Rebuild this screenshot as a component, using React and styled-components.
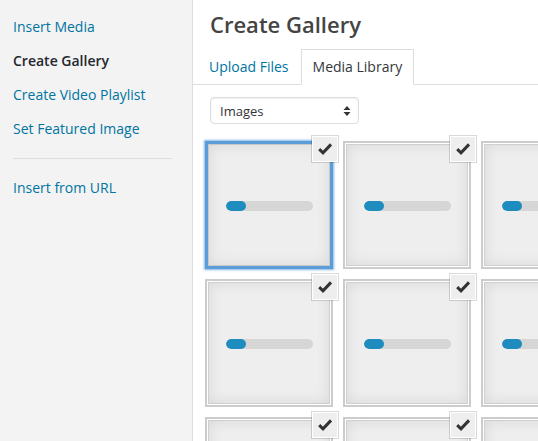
import React from 'react';
import styled, { createGlobalStyle } from 'styled-components';

const GlobalStyle = createGlobalStyle`
  * { box-sizing: border-box; }
  html, body { margin: 0; padding: 0; }
  body {
    font-family: "Open Sans", "Noto Sans", "Liberation Sans", sans-serif;
    font-size: 14px;
    background: #fff;
    overflow: hidden;
  }
`

const menu = [
  { label: 'Insert Media' },
  { label: 'Create Gallery', active: true },
  { label: 'Create Video Playlist' },
  { label: 'Set Featured Image' },
  { separator: true },
  { label: 'Insert from URL' },
];

const tiles = [
  { focused: true }, {}, {},
  {}, {}, {},
  {}, {}, {},
];

const Frame = styled.div`
  display: flex;
  width: 538px;
  height: 441px;
  overflow: hidden;
`
const Menu = styled.nav`
  flex: 0 0 193px;
  padding: 10px 0;
  background: #f3f3f3;
  border-right: 1px solid #dddddd;
`
const MenuItem = styled.a`
  display: block;
  padding: 8px 13px;
  line-height: 18px;
  font-size: 14px;
  white-space: nowrap;
  text-decoration: none;
  color: ${({ $active }) => ($active ? '#23282d' : '#0074a2')};
  font-weight: ${({ $active }) => ($active ? 600 : 400)};
`
const Separator = styled.div`
  height: 1px;
  margin: 12px 20px 12px 13px;
  background: #dddddd;
`
const Content = styled.main`
  flex: 1;
  min-width: 0;
  display: flex;
  flex-direction: column;
`
const Title = styled.h1`
  margin: 0;
  padding: 0 17px;
  height: 49px;
  line-height: 49px;
  font-size: 22px;
  font-weight: 600;
  color: #444444;
  white-space: nowrap;
`
const Router = styled.div`
  display: flex;
  align-items: flex-end;
  height: 36px;
  padding-left: 4px;
  border-bottom: 1px solid #dddddd;
`
const Tab = styled.a`
  padding: 8px 11px;
  line-height: 18px;
  font-size: 14px;
  white-space: nowrap;
  text-decoration: none;
  border: 1px solid ${({ $active }) => ($active ? '#dddddd' : 'transparent')};
  border-bottom-color: ${({ $active }) => ($active ? '#ffffff' : 'transparent')};
  margin-bottom: -1px;
  background: ${({ $active }) => ($active ? '#ffffff' : 'transparent')};
  color: ${({ $active }) => ($active ? '#32373c' : '#0074a2')};
`
const Toolbar = styled.div`
  padding: 12px 17px 0;
`
const Select = styled.div`
  display: flex;
  align-items: center;
  justify-content: space-between;
  width: 149px;
  height: 27px;
  padding: 0 7px 0 9px;
  border: 1px solid #dddddd;
  border-radius: 4px;
  background: #fff;
  box-shadow: inset 0 1px 2px rgba(0, 0, 0, 0.07);
  font-size: 13px;
  color: #333333;
`
const Grid = styled.ul`
  list-style: none;
  margin: 20px 0 0;
  padding: 0 0 0 15px;
  display: grid;
  grid-template-columns: repeat(3, 122px);
  grid-auto-rows: 122px;
  gap: 16px;
`
const Tile = styled.li`
  position: relative;
  width: 122px;
  height: 122px;
  background: #eeeeee;
  box-shadow: ${({ $focused }) => ($focused
    ? 'inset 0 0 0 1px #c8c8c8, inset 0 0 15px rgba(0,0,0,0.1), 0 0 0 3px #5b9dd9, 0 0 2px 4px rgba(91,157,217,0.75)'
    : 'inset 0 0 0 1px #cfcfcf, inset 0 0 15px rgba(0,0,0,0.1), 0 0 0 1px #ffffff, 0 0 0 3px #cccccc')};
`
const Progress = styled.div`
  position: absolute;
  top: 50%;
  left: 15%;
  width: 71%;
  height: 10px;
  margin-top: -4px;
  border-radius: 10px;
  background: #d6d6d6;
  overflow: hidden;
`
const ProgressFill = styled.div`
  height: 100%;
  border-radius: 10px;
  background: #1e8cbe;
`
const Check = styled.div`
  position: absolute;
  top: -7px;
  right: -7px;
  width: 24px;
  height: 24px;
  display: flex;
  align-items: center;
  justify-content: center;
  background: #eeeeee;
  box-shadow: 0 0 0 1px #ffffff, 0 0 0 2px rgba(0, 0, 0, 0.15);
`

function CheckIcon() {
  return (
    <svg width="18" height="18" viewBox="0 0 18 18">
      <polyline points="3.2,9.2 7,12.8 15,4.4" fill="none" stroke="#333" strokeWidth="3" strokeLinecap="butt" strokeLinejoin="miter" />
    </svg>
  );
}

function Arrows() {
  return (
    <svg width="8" height="12" viewBox="0 0 8 12">
      <polygon points="4,1 7.5,5 0.5,5" fill="#333" />
      <polygon points="0.5,7 7.5,7 4,11" fill="#333" />
    </svg>
  );
}

export default function App() {
  return (
    <Frame>
      <GlobalStyle />
      <Menu>
        {menu.map((item, i) => item.separator
          ? <Separator key={i} />
          : <MenuItem key={i} $active={item.active}>{item.label}</MenuItem>
        )}
      </Menu>

      <Content>
        <Title>Create Gallery</Title>
        <Router>
          <Tab>Upload Files</Tab>
          <Tab $active>Media Library</Tab>
        </Router>
        <Toolbar>
          <Select>
            <span>Images</span>
            <Arrows />
          </Select>
        </Toolbar>
        <Grid>
          {tiles.map((t, i) => (
            <Tile key={i} $focused={t.focused}>
              <Progress>
                <ProgressFill style={{ width: '20px' }} />
              </Progress>
              <Check><CheckIcon /></Check>
            </Tile>
          ))}
        </Grid>
      </Content>
    </Frame>
  );
}
